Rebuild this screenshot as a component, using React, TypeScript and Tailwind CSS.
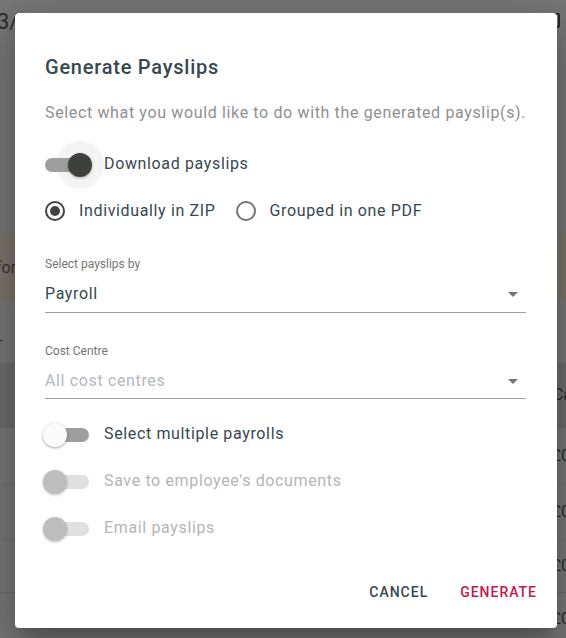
import React from "react";

function Toggle({ on = false, disabled = false }: { on?: boolean; disabled?: boolean }) {
  const track = disabled ? "bg-[#e0e0e0]" : "bg-[#9e9e9e]";
  const thumb = disabled
    ? "bg-[#bdbdbd] shadow-[0_1px_3px_rgba(0,0,0,0.25)]"
    : on
    ? "bg-[#3e403e] shadow-[0_1px_3px_rgba(0,0,0,0.3)]"
    : "bg-[#fafafa] shadow-[0_1px_3px_rgba(0,0,0,0.35)]";
  return (
    <div className="relative w-[50px] h-[24px] shrink-0 -ml-[2px]">
      {on && <div className="absolute left-[13px] -top-[12px] w-[48px] h-[48px] rounded-full bg-[#f4f4f4]" />}
      <div className={`absolute left-[2px] top-[5px] w-[44px] h-[14px] rounded-full ${track}`} />
      <div className={`absolute top-0 ${on ? "left-[25px]" : "left-0"} w-[24px] h-[24px] rounded-full ${thumb}`} />
    </div>
  );
}

function Radio({ checked }: { checked?: boolean }) {
  return (
    <div
      className={`w-[20px] h-[20px] rounded-full border-2 flex items-center justify-center shrink-0 ${
        checked ? "border-[#424242]" : "border-[#757575]"
      }`}
    >
      {checked && <div className="w-[10px] h-[10px] rounded-full bg-[#424242]" />}
    </div>
  );
}

function Caret() {
  return (
    <svg width="10" height="5" viewBox="0 0 10 5" className="mr-[8px]">
      <path d="M0 0 L10 0 L5 5 Z" fill="#757575" />
    </svg>
  );
}

export default function App() {
  return (
    <div
      className="relative w-[566px] h-[638px] overflow-hidden bg-[#767676]"
      style={{ fontFamily: "Roboto, 'Noto Sans', Arial, sans-serif" }}
    >
      {/* dimmed page behind */}
      <div className="flex flex-col w-full">
        <div className="h-[44px] flex items-start justify-between pt-[9px]">
          <span className="text-[22px] leading-[26px] text-[#2b2b2b] -ml-[3px]">3/</span>
          <div className="w-[13px] h-[15px] border-2 border-[#2b2b2b] rounded-[2px] mr-[6px] mt-[4px]" />
        </div>
        <div className="h-[189px]" />
        <div className="h-[69px] bg-[#7a7469] flex items-center">
          <span className="text-[16px] text-[#333] -ml-[4px]">for</span>
        </div>
        <div className="h-[61px] flex items-end pb-[12px]">
          <span className="text-[14px] text-[#333] -ml-[1px]">-</span>
        </div>
        <div className="h-[65px] bg-[#6c6c6c] border-b border-[#666] flex items-center justify-end">
          <span className="text-[16px] text-[#2b2b2b] -mr-[6px]">Ca</span>
        </div>
        {[57, 55, 53, 53].map((h, i) => (
          <div key={i} style={{ height: h }} className="border-b border-[#6a6a6a] flex items-center justify-end">
            <span className="text-[16px] text-[#2b2b2b] -mr-[4px]">£0</span>
          </div>
        ))}
      </div>

      {/* dialog */}
      <div className="absolute left-[15px] top-[13px] w-[542px] h-[615px] bg-white rounded-[4px] shadow-[0_11px_15px_-7px_rgba(0,0,0,0.2),0_24px_38px_3px_rgba(0,0,0,0.14),0_9px_46px_8px_rgba(0,0,0,0.12)] flex flex-col">
        <div className="flex flex-col pl-[30px] pr-[30px] pt-[40px]">
          <h2 className="text-[20px] leading-[28px] font-medium tracking-[0.038em] text-[#37474f]">Generate Payslips</h2>
          <p className="mt-[20px] text-[16px] leading-[24px] tracking-[0.04em] text-[#8f8f8f] whitespace-nowrap">
            Select what you would like to do with the generated payslip(s).
          </p>

          <div className="mt-[28px] h-[24px] flex items-center">
            <Toggle on />
            <span className="ml-[11px] text-[16px] tracking-[0.04em] text-[#37474f] -mt-[3px]">Download payslips</span>
          </div>

          <div className="mt-[22px] h-[24px] flex items-center">
            <div className="flex items-center">
              <Radio checked />
              <span className="ml-[14px] text-[16px] tracking-[0.04em] text-[#37474f]">Individually in ZIP</span>
            </div>
            <div className="flex items-center ml-[20px]">
              <Radio />
              <span className="ml-[14px] text-[16px] tracking-[0.04em] text-[#37474f]">Grouped in one PDF</span>
            </div>
          </div>

          <div className="mt-[33px] flex flex-col border-b border-[#9e9e9e] w-[481px]">
            <span className="text-[12px] leading-[16px] text-[#757575]">Select payslips by</span>
            <div className="mt-[10px] mb-[6px] h-[24px] flex items-center justify-between">
              <span className="text-[16px] tracking-[0.04em] text-[#37474f]">Payroll</span>
              <Caret />
            </div>
          </div>

          <div className="mt-[30px] flex flex-col border-b border-[#9e9e9e] w-[481px]">
            <span className="text-[12px] leading-[16px] text-[#757575]">Cost Centre</span>
            <div className="mt-[10px] mb-[5px] h-[24px] flex items-center justify-between">
              <span className="text-[16px] tracking-[0.04em] text-[#b4b8bb]">All cost centres</span>
              <Caret />
            </div>
          </div>

          <div className="mt-[24px] h-[24px] flex items-center">
            <Toggle />
            <span className="ml-[11px] text-[16px] tracking-[0.04em] text-[#37474f] -mt-[2px]">Select multiple payrolls</span>
          </div>
          <div className="mt-[23px] h-[24px] flex items-center">
            <Toggle disabled />
            <span className="ml-[11px] text-[16px] tracking-[0.04em] text-[#b5b5b5] -mt-[2px]">Save to employee's documents</span>
          </div>
          <div className="mt-[23px] h-[24px] flex items-center">
            <Toggle disabled />
            <span className="ml-[11px] text-[16px] tracking-[0.04em] text-[#b5b5b5] -mt-[2px]">Email payslips</span>
          </div>
        </div>

        <div className="flex-1" />
        <div className="flex justify-end items-center pr-[4px] pb-[18px]">
          <button className="h-[36px] px-[16px] text-[14px] font-medium tracking-[0.07em] text-[#37474f]">CANCEL</button>
          <button className="h-[36px] px-[16px] text-[14px] font-medium tracking-[0.07em] text-[#c8174b]">GENERATE</button>
        </div>
      </div>
    </div>
  );
}
